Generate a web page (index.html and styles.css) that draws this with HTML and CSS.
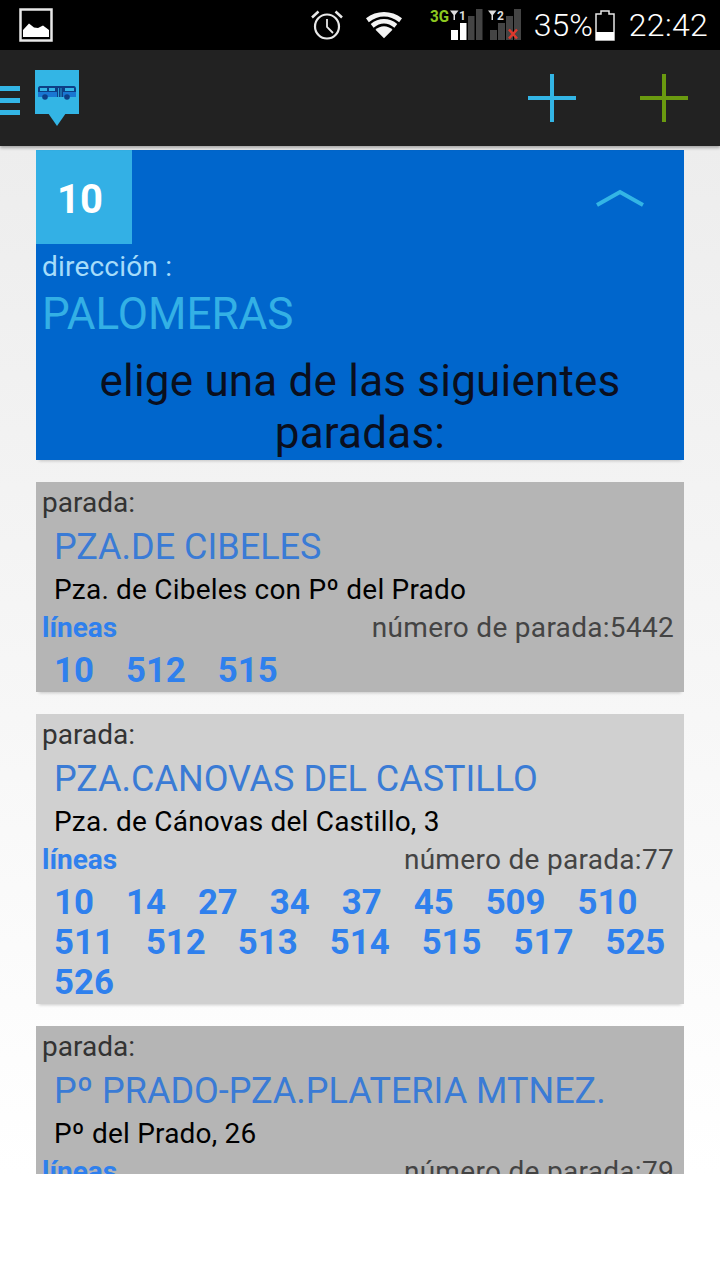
FILE: index.html
```html
<!DOCTYPE html>
<html lang="es">
<head>
    <meta charset="UTF-8">
    <meta name="viewport" content="width=device-width, initial-scale=1.0">
    <title>Paradas</title>
    <link rel="stylesheet" href="styles.css">
</head>
<body>

    <div class="status-bar">
        <svg class="status-photo" width="34" height="34" viewBox="0 0 34 34">
            <rect x="1.500" y="1.500" width="31" height="31" fill="none" stroke="#e8e8e8" stroke-width="2.500"/>
            <path d="M4 29V22L10 15.500L15 19.500L19 20L24 17.500L30 22V29Z" fill="#fff"/>
        </svg>
        <div class="status-right">
            <svg width="34" height="32" viewBox="0 0 34 32">
                <circle cx="17" cy="17.500" r="12" fill="none" stroke="#e8e8e8" stroke-width="2.200"/>
                <path d="M17 10V18L23 24" fill="none" stroke="#e8e8e8" stroke-width="1.800"/>
                <path d="M2 8.500L8.500 2.500M32 8.500L25.500 2.500" fill="none" stroke="#e8e8e8" stroke-width="2.500"/>
            </svg>
            <svg class="status-wifi" width="36" height="28" viewBox="0 0 38 28">
                <path d="M0 7C11 -2 27 -2 38 7L35 11C25 3 13 3 3 11Z" fill="#f4f4f4"/>
                <path d="M5 13C13 6 25 6 33 13L30 17C23 11 15 11 8 17Z" fill="#f4f4f4"/>
                <path d="M10 19C15 14 23 14 28 19L19 28Z" fill="#f4f4f4"/>
            </svg>
            <svg class="signal" width="92" height="34" viewBox="0 0 92 34">
                <text x="0" y="14" class="net" textLength="19" lengthAdjust="spacingAndGlyphs">3G</text>
                <path d="M20 2.500H28.500L25 7V12H23.500V7Z" fill="#ddd"/>
                <text x="29" y="12" class="sim">1</text>
                <rect x="21" y="22" width="7" height="10" fill="#fff"/>
                <rect x="30" y="15" width="6.500" height="17" fill="#fff"/>
                <rect x="38" y="8" width="6.500" height="24" fill="#444"/>
                <rect x="46" y="1" width="6.500" height="31" fill="#444"/>
                <path d="M58 2.500H66.500L63 7V12H61.500V7Z" fill="#ddd"/>
                <text x="67" y="12" class="sim">2</text>
                <rect x="60" y="22" width="7" height="10" fill="#444"/>
                <rect x="68" y="15" width="7" height="17" fill="#444"/>
                <rect x="76" y="8" width="7" height="24" fill="#444"/>
                <rect x="84" y="1" width="7" height="31" fill="#444"/>
                <path d="M79 21.500L87 30.500M87 21.500L79 30.500" stroke="#e0382c" stroke-width="2.500"/>
            </svg>
            <span class="status-text battery-text">35%</span>
            <svg class="status-battery" width="20" height="31" viewBox="0 0 20 31">
                <path d="M6 1H14V4H19V30H1V4H6Z" fill="none" stroke="#e8e8e8" stroke-width="1.500"/>
                <rect x="1" y="22" width="18" height="8" fill="#fff"/>
            </svg>
            <span class="status-text clock">22:42</span>
        </div>
    </div>

    <header class="app-bar">
        <div class="app-left">
            <div class="menu-lines"><i></i><i></i><i></i></div>
            <div class="app-logo">
                <svg width="38" height="14" viewBox="0 0 38 14">
                    <path d="M2 0H36C37 0 38 1 38 3V11H0V2C0 1 1 0 2 0Z" fill="#0d3f86"/>
                    <rect x="2" y="2" width="7" height="3" fill="#33b5e5"/>
                    <rect x="11" y="2" width="6" height="3" fill="#33b5e5"/>
                    <rect x="27" y="2" width="9" height="3" fill="#33b5e5"/>
                    <path d="M20.500 2V11M23 2V11" stroke="#33b5e5" stroke-width="0.800"/>
                    <path d="M0 6H19V11H0ZM25 6H38V11H25Z" fill="#1976d2"/>
                    <circle cx="7" cy="11" r="2.800" fill="#0d3f86"/>
                    <circle cx="29" cy="11" r="2.800" fill="#0d3f86"/>
                </svg>
            </div>
        </div>
        <div class="app-actions">
            <svg width="48" height="48" viewBox="0 0 48 48">
                <path d="M24 0V48M0 24H48" stroke="#33b5e5" stroke-width="4"/>
            </svg>
            <svg width="48" height="48" viewBox="0 0 48 48">
                <path d="M24 0V48M0 24H48" stroke="#6a9a10" stroke-width="4"/>
            </svg>
        </div>
    </header>

    <main class="content">
        <section class="line-card">
            <div class="line-top">
                <div class="line-number">10</div>
                <svg class="chevron" width="48" height="18" viewBox="0 0 48 18">
                    <path d="M1 16L24 3L47 16" fill="none" stroke="#33b5e5" stroke-width="4"/>
                </svg>
            </div>
            <div class="direction-label">dirección :</div>
            <div class="direction-name">PALOMERAS</div>
            <h2 class="choose">elige una de las siguientes paradas:</h2>
        </section>

        <section class="stop dark">
            <div class="stop-label">parada:</div>
            <div class="stop-name">PZA.DE CIBELES</div>
            <div class="stop-address">Pza. de Cibeles con Pº del Prado</div>
            <div class="stop-meta">
                <span class="lines-label">líneas</span>
                <span class="stop-code">número de parada:5442</span>
            </div>
            <div class="lines">
                <span>10</span><span>512</span><span>515</span>
            </div>
        </section>

        <section class="stop light">
            <div class="stop-label">parada:</div>
            <div class="stop-name">PZA.CANOVAS DEL CASTILLO</div>
            <div class="stop-address">Pza. de Cánovas del Castillo, 3</div>
            <div class="stop-meta">
                <span class="lines-label">líneas</span>
                <span class="stop-code">número de parada:77</span>
            </div>
            <div class="lines">
                <span>10</span><span>14</span><span>27</span><span>34</span><span>37</span><span>45</span><span>509</span><span>510</span>
                <span>511</span><span>512</span><span>513</span><span>514</span><span>515</span><span>517</span><span>525</span>
                <span>526</span>
            </div>
        </section>

        <section class="stop dark">
            <div class="stop-label">parada:</div>
            <div class="stop-name">Pº PRADO-PZA.PLATERIA MTNEZ.</div>
            <div class="stop-address">Pº del Prado, 26</div>
            <div class="stop-meta">
                <span class="lines-label">líneas</span>
                <span class="stop-code">número de parada:79</span>
            </div>
        </section>
    </main>

</body>
</html>
```

FILE: styles.css
```css
body {
    margin: 0;
    width: 720px;
    height: 1280px;
    overflow: hidden;
    background-color: #fff;
    font-family: Roboto, sans-serif;
}

.status-bar {
    height: 50px;
    background-color: #000;
    display: flex;
    align-items: center;
    justify-content: space-between;
    padding: 0 12px 0 19px;
    box-sizing: border-box;
}

.status-right {
    display: flex;
    align-items: center;
}

.status-wifi {
    margin-left: 22px;
}

.signal {
    margin-left: 28px;
    overflow: visible;
}

.net {
    fill: #8cc920;
    font-size: 17px;
    font-weight: 700;
    font-family: Roboto, sans-serif;
}

.sim {
    fill: #ddd;
    font-size: 12px;
    font-family: Roboto, sans-serif;
    font-weight: 700;
}

.status-text {
    color: #fff;
    font-size: 32px;
    font-weight: 300;
}

.battery-text {
    margin-left: 12px;
}

.status-battery {
    margin-left: 2px;
}

.clock {
    margin-left: 14px;
    letter-spacing: 0.3px;
}

.app-bar {
    height: 96px;
    background-color: #222;
    display: flex;
    align-items: center;
    justify-content: space-between;
    padding-right: 32px;
    box-shadow: 0 2px 3px rgba(0, 0, 0, 0.3);
    position: relative;
}

.app-left {
    display: flex;
    align-items: flex-start;
    gap: 15px;
    margin-top: -1px;
}

.menu-lines {
    width: 20px;
    display: flex;
    flex-direction: column;
    gap: 7px;
    margin-top: 16px;
}

.menu-lines i {
    display: block;
    height: 5px;
    background-color: #33b5e5;
}

.app-logo {
    width: 44px;
    height: 44px;
    background-color: #33b5e5;
    display: flex;
    justify-content: center;
    padding-top: 16px;
    box-sizing: border-box;
    position: relative;
    margin-bottom: 12px;
}

.app-logo::after {
    content: "";
    position: absolute;
    left: 13px;
    top: 43px;
    border-left: 9px solid transparent;
    border-right: 9px solid transparent;
    border-top: 13px solid #33b5e5;
}

.app-actions {
    display: flex;
    gap: 64px;
}

.content {
    height: 1028px;
    overflow: hidden;
    padding: 4px 36px 0;
    box-sizing: border-box;
    background: linear-gradient(#ededed, #ffffff);
}

.line-card {
    height: 310px;
    background-color: #0066cc;
    box-shadow: 0 4px 3px -3px rgba(0, 0, 0, 0.2);
    margin-bottom: 22px;
}

.line-top {
    display: flex;
    justify-content: space-between;
    align-items: flex-start;
    padding-right: 40px;
}

.line-number {
    width: 88px;
    height: 90px;
    padding: 4px 8px 0 0;
    background-color: #33b0e5;
    color: #fff;
    font-size: 40px;
    font-weight: 700;
    display: flex;
    align-items: center;
    justify-content: center;
}

.chevron {
    margin-top: 39px;
}

.direction-label {
    color: #a6dcfa;
    font-size: 28px;
    letter-spacing: 0.2px;
    line-height: 44px;
    padding-top: 1px;
    margin-bottom: -1px;
    padding-left: 6px;
}

.direction-name {
    color: #33b0e5;
    font-size: 44px;
    line-height: 50px;
    padding-left: 6px;
    margin-top: 1px;
}

.choose {
    margin: 16px 0 0;
    color: #0a0f1e;
    font-size: 44px;
    font-weight: 400;
    letter-spacing: 0.2px;
    line-height: 52px;
    text-align: center;
    padding: 0 60px;
}

.stop {
    padding: 1px 10px 1px 6px;
    margin-bottom: 22px;
    box-shadow: 0 4px 3px -3px rgba(0, 0, 0, 0.2);
}

.dark {
    background-color: #b5b5b5;
}

.light {
    background-color: #d0d0d0;
}

.stop-label {
    color: #333;
    font-size: 28px;
    line-height: 40px;
}

.stop-name {
    color: #3a7bd5;
    font-size: 36px;
    line-height: 48px;
    padding-left: 12px;
}

.stop-address {
    color: #000;
    font-size: 28px;
    letter-spacing: 0.2px;
    line-height: 38px;
    padding-left: 12px;
}

.stop-meta {
    display: flex;
    justify-content: space-between;
    line-height: 38px;
    font-size: 28px;
}

.lines-label {
    color: #2f80ed;
    font-weight: 700;
}

.stop-code {
    color: #444;
    letter-spacing: 0.3px;
}

.lines {
    display: flex;
    flex-wrap: wrap;
    column-gap: 32px;
    padding: 0 0 1px 12px;
    color: #2f80ed;
    font-size: 34.800px;
    font-weight: 700;
    line-height: 40px;
    margin-top: 3px;
}
```
